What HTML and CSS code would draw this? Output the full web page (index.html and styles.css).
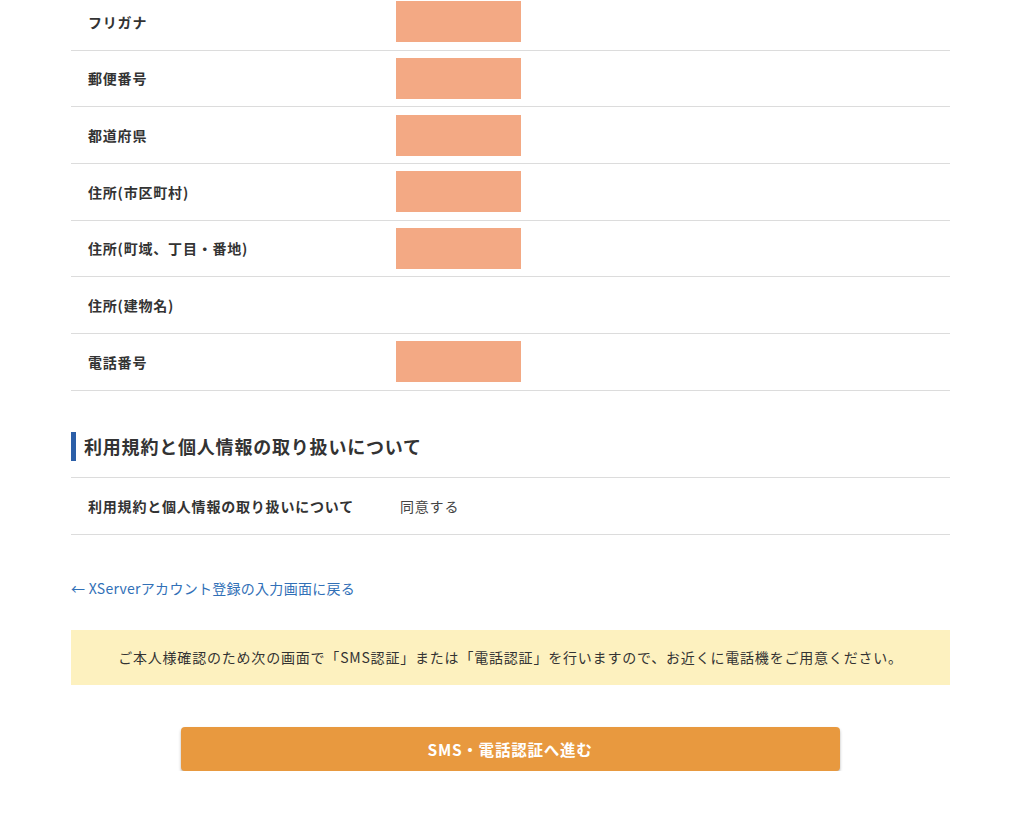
FILE: index.html
```html
<!DOCTYPE html>
<html lang="ja">
<head>
<meta charset="utf-8">
<title>確認</title>
<link rel="stylesheet" href="styles.css">
</head>
<body>
<div class="page">
  <div class="table first">
    <div class="row"><div class="label">フリガナ</div><div class="value"><span class="mask"></span></div></div>
    <div class="row"><div class="label">郵便番号</div><div class="value"><span class="mask"></span></div></div>
    <div class="row"><div class="label">都道府県</div><div class="value"><span class="mask"></span></div></div>
    <div class="row"><div class="label">住所(市区町村)</div><div class="value"><span class="mask"></span></div></div>
    <div class="row"><div class="label">住所(町域、丁目・番地)</div><div class="value"><span class="mask"></span></div></div>
    <div class="row"><div class="label">住所(建物名)</div><div class="value"></div></div>
    <div class="row"><div class="label">電話番号</div><div class="value"><span class="mask"></span></div></div>
  </div>

  <h2 class="section-title">利用規約と個人情報の取り扱いについて</h2>
  <div class="table bordered">
    <div class="row"><div class="label">利用規約と個人情報の取り扱いについて</div><div class="value text">同意する</div></div>
  </div>

  <a class="back-link" href="#">← XServerアカウント登録の入力画面に戻る</a>

  <div class="notice">ご本人様確認のため次の画面で「SMS認証」または「電話認証」を行いますので、お近くに電話機をご用意ください。</div>

  <div class="actions">
    <button class="submit" type="button">SMS・電話認証へ進む</button>
  </div>
</div>
</body>
</html>
```

FILE: styles.css
```css
html, body {
  margin: 0;
  padding: 0;
  background: #fff;
}
body {
  font-family: "Noto Sans CJK JP", "Noto Sans", sans-serif;
  color: #333;
  letter-spacing: 0.05em;
}
.page {
  width: 879px;
  margin-left: 71px;
}
.table.first {
  margin-top: -6px;
}
.row {
  display: grid;
  grid-template-columns: 325px 1fr;
  align-items: center;
  box-sizing: border-box;
  height: 56.67px;
  border-bottom: 1px solid #dcdcdc;
}
.table.bordered {
  border-top: 1px solid #dcdcdc;
}
.table.bordered .row {
  height: 57px;
}
.label {
  padding-left: 17px;
  font-size: 14px;
  font-weight: bold;
  line-height: 20px;
  color: #333;
}
.value {
  display: flex;
  align-items: center;
}
.value.text {
  padding-left: 4px;
  font-size: 14px;
  line-height: 20px;
  color: #444;
}
.mask {
  display: block;
  width: 125px;
  height: 41px;
  background: #f3a984;
}
.section-title {
  margin: 41px 0 16px;
  border-left: 5px solid #2c5fa8;
  padding-left: 8px;
  font-size: 18px;
  font-weight: bold;
  line-height: 29px;
  color: #333;
}
.back-link {
  display: block;
  margin-top: 43px;
  font-size: 14px;
  line-height: 20px;
  color: #3170b7;
  text-decoration: none;
  letter-spacing: 0.02em;
}
.notice {
  margin-top: 32px;
  height: 55px;
  background: #fdf1bf;
  display: flex;
  align-items: center;
  justify-content: center;
  font-size: 14px;
  color: #333;
}
.actions {
  display: flex;
  justify-content: center;
  margin-top: 42px;
  padding-right: 1px;
}
.submit {
  width: 659px;
  height: 44px;
  border: none;
  border-radius: 4px;
  background: #e8993f;
  color: #fff;
  font-family: "Noto Sans CJK JP", "Noto Sans", sans-serif;
  font-size: 15.5px;
  font-weight: bold;
  letter-spacing: 0.05em;
  box-shadow: 0 2px 3px rgba(0, 0, 0, 0.3);
  cursor: pointer;
}
```
